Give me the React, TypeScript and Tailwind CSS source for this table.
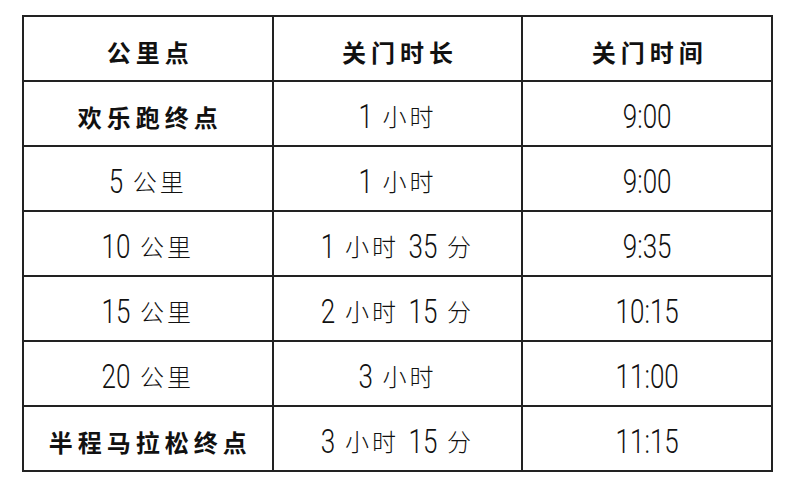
const rows = [
  { point: '欢乐跑终点', bold: true, duration: '1 小时', time: '9:00' },
  { point: '5 公里', bold: false, duration: '1 小时', time: '9:00' },
  { point: '10 公里', bold: false, duration: '1 小时 35 分', time: '9:35' },
  { point: '15 公里', bold: false, duration: '2 小时 15 分', time: '10:15' },
  { point: '20 公里', bold: false, duration: '3 小时', time: '11:00' },
  { point: '半程马拉松终点', bold: true, duration: '3 小时 15 分', time: '11:15' },
];

// digits in the reference are tall and narrow: draw them at normal width, stretched vertically
function Mixed({ text }: { text: string }) {
  const parts = text.split(/(\d[\d:]*)/).filter(Boolean);
  return (
    <>
      {parts.map((p, i) =>
        /\d/.test(p) ? (
          <span
            key={i}
            className="inline-block scale-y-[1.25] text-[26px] font-light tracking-normal"
            style={{ fontFamily: 'Roboto, "Liberation Sans", sans-serif' }}
          >
            {p}
          </span>
        ) : (
          <span key={i} style={{ fontFamily: '"Liberation Sans", "Noto Sans CJK SC", sans-serif' }}>
            {p}
          </span>
        )
      )}
    </>
  );
}

export default function App() {
  return (
    <div
      className="w-[800px] h-[481px] bg-white text-[#111]"
      style={{ fontFamily: '"Noto Sans CJK SC", sans-serif' }}
    >
      <div className="pt-[15px] pl-[22px]">
        <table className="w-[751px] border-collapse border-2 border-[#222] table-fixed">
          <thead>
            <tr className="h-[65px]">
              {['公里点', '关门时长', '关门时间'].map((h) => (
                <th
                  key={h}
                  className="border-2 border-[#222] text-[24px] font-bold tracking-[5px] pl-[5px] pt-[6px] align-middle"
                >
                  {h}
                </th>
              ))}
            </tr>
          </thead>
          <tbody>
            {rows.map((r) => (
              <tr key={r.point} className="h-[65px]">
                <td
                  className={`border-2 border-[#222] text-center align-middle pt-[8px] text-[24px] ${
                    r.bold ? 'font-bold tracking-[5px] pl-[5px]' : 'font-light tracking-[3px]'
                  }`}
                >
                  <Mixed text={r.point} />
                </td>
                <td className="border-2 border-[#222] text-center align-middle pt-[8px] text-[24px] font-light tracking-[3px]">
                  <Mixed text={r.duration} />
                </td>
                <td className="border-2 border-[#222] text-center align-middle pt-[8px] text-[24px]">
                  <Mixed text={r.time} />
                </td>
              </tr>
            ))}
          </tbody>
        </table>
      </div>
    </div>
  );
}
